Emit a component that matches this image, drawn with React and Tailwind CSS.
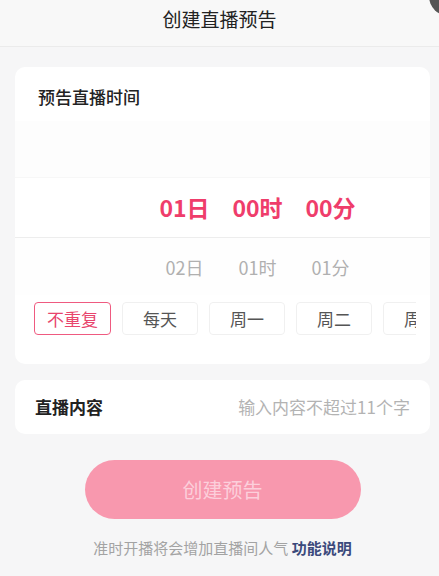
import React, { useState } from 'react';

const font = { fontFamily: '"Noto Sans CJK SC", "Noto Sans", sans-serif' };

const repeats = ['不重复', '每天', '周一', '周二', '周三', '周四'];

export default function App(){
  const [repeat, setRepeat] = useState('不重复');

  return (
    <div className="relative w-[439px] h-[576px] overflow-hidden bg-[#f6f6f7] text-[#333]" style={font}>
      {/* top-right floating dot */}
      <div className="absolute -top-[24px] -right-[30px] w-[40px] h-[40px] rounded-full bg-[#555]" />

      <header className="h-[47px] flex items-center justify-center border-b border-[#ebebeb] bg-[#f8f8f8]">
        <h1 className="text-[19px] leading-none text-[#222] -mt-[10px]">创建直播预告</h1>
      </header>

      <div className="pl-[15px] pr-[9px] pt-[20px]">
        {/* time card */}
        <section className="bg-white rounded-[10px] pb-[29px] overflow-hidden">
          <div className="pl-[23px] pt-[20px] pb-[14px] text-[17px] leading-[20px] font-medium text-[#222]">预告直播时间</div>

          <div>
            <div className="h-[57px] bg-[#fdfdfd] border-b border-[#f7f7f7]" />
            <div className="h-[60px] border-b border-[#ededed] flex items-center pl-[133px]">
              {['01日', '00时', '00分'].map(t => (
                <div key={t} className="w-[73px] text-center text-[23px] font-bold text-[#ef3d6b] leading-none">{t}</div>
              ))}
            </div>
            <div className="h-[57px] flex items-center pl-[133px] bg-[#fefefe]">
              {['02日', '01时', '01分'].map(t => (
                <div key={t} className="w-[73px] text-center text-[18px] text-[#b0b0b0] leading-none">{t}</div>
              ))}
            </div>
          </div>

          <div className="ml-[19px] mr-[14px] mt-[7px] overflow-hidden">
            <div className="flex gap-[11px] w-max">
              {repeats.map(r => (
                <button
                  key={r}
                  onClick={() => setRepeat(r)}
                  className={repeat === r
                    ? 'w-[77px] h-[33px] rounded-[4px] border border-[#ef5a80] text-[#e8456d] text-[17px] bg-white'
                    : 'w-[76px] h-[33px] rounded-[4px] border border-[#f0f0f0] text-[#555] text-[17px] bg-white'}
                >{r}</button>
              ))}
            </div>
          </div>
        </section>

        {/* content card */}
        <section className="mt-[16px] h-[54px] bg-white rounded-[10px] flex items-center justify-between pl-[20px] pr-[20px]">
          <span className="text-[17px] font-bold text-[#222]">直播内容</span>
          <span className="text-[17px] text-[#b3b3b3]">输入内容不超过11个字</span>
        </section>

        <div className="flex justify-center mt-[26px]">
          <button className="w-[276px] h-[59px] rounded-full bg-[#f898ae] text-[20px] text-[#fccfdb]">创建预告</button>
        </div>

        <p className="mt-[18px] text-center text-[15px] text-[#a3a3a3]">
          准时开播将会增加直播间人气 <span className="font-bold text-[#3b4a7c]">功能说明</span>
        </p>
      </div>
    </div>
  );
}
